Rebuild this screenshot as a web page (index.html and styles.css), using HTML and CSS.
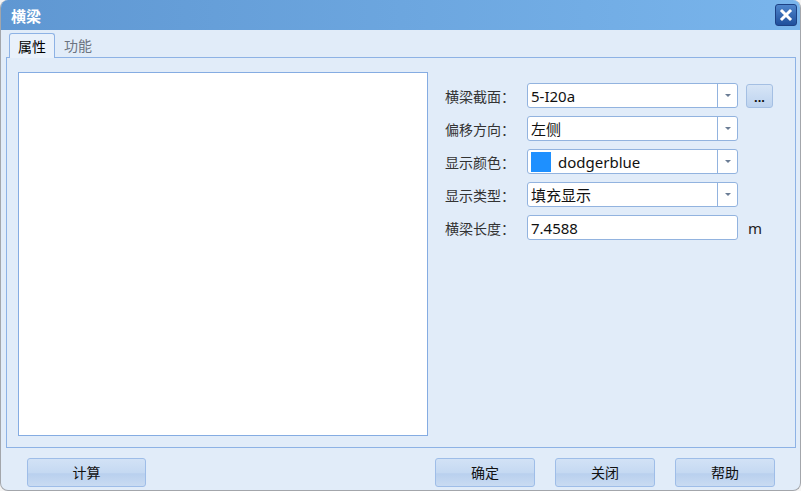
FILE: index.html
```html
<!DOCTYPE html>
<html lang="zh">
<head>
<meta charset="utf-8">
<link rel="stylesheet" href="styles.css">
</head>
<body>
<div class="window">
  <div class="titlebar">
    <span class="title">横梁</span>
    <span class="close">
      <svg width="22" height="22" viewBox="0 0 22 22"><path d="M7 7 L15 15 M15 7 L7 15" stroke="#fff" stroke-width="3" stroke-linecap="square"/></svg>
    </span>
  </div>
  <div class="body">
    <div class="tabs">
      <div class="tab active">属性</div>
      <div class="tab">功能</div>
    </div>
    <div class="panel">
      <div class="preview"></div>
      <div class="form">
        <div class="row">
          <span class="label">横梁截面：</span>
          <div class="combo"><span class="val">5-I20a</span><span class="arrow"></span></div>
          <button class="dots">...</button>
        </div>
        <div class="row">
          <span class="label">偏移方向：</span>
          <div class="combo"><span class="val">左侧</span><span class="arrow"></span></div>
        </div>
        <div class="row">
          <span class="label">显示颜色：</span>
          <div class="combo"><span class="val color"><i class="swatch"></i>dodgerblue</span><span class="arrow"></span></div>
        </div>
        <div class="row">
          <span class="label">显示类型：</span>
          <div class="combo"><span class="val">填充显示</span><span class="arrow"></span></div>
        </div>
        <div class="row">
          <span class="label">横梁长度：</span>
          <div class="combo text"><span class="val">7.4588</span></div>
          <span class="unit">m</span>
        </div>
      </div>
    </div>
    <div class="footer">
      <button class="btn">计算</button>
      <div class="spacer"></div>
      <button class="btn">确定</button>
      <button class="btn">关闭</button>
      <button class="btn">帮助</button>
    </div>
  </div>
</div>
</body>
</html>
```
FILE: styles.css
```css
* { box-sizing: border-box; }
html, body { margin: 0; padding: 0; background: #f4f4f4; }
body { font-family: "Noto Sans", "Noto Sans CJK SC", sans-serif; font-size: 14px; color: #222; }
.window {
  width: 801px; height: 491px;
  border-radius: 8px;
  overflow: hidden;
  background: #e1ecf9;
  border: 1px solid #a3a6ab;
  border-top: none;
  display: flex; flex-direction: column;
}
.titlebar {
  height: 31px;
  background: linear-gradient(to right, #5f97d2, #79b5ec);
  display: flex; align-items: center; justify-content: space-between;
  padding: 0 3px 0 10px;
}
.title { color: #fff; font-weight: bold; font-size: 15px; font-family: "Noto Sans CJK SC", sans-serif; }
.close {
  width: 22px; height: 22px;
  border-radius: 3px;
  background: linear-gradient(#4f86cc, #1f4f9c);
  border: 1px solid #1d4184;
  display: flex;
}
.close svg { margin: -1px; }
.body { flex: 1; display: flex; flex-direction: column; padding: 3px 4px 0 5px; }
.tabs { display: flex; padding-left: 3px; height: 25px; position: relative; z-index: 1; }
.tab {
  font-family: "Noto Sans CJK SC", sans-serif;
  padding: 0 9px; line-height: 24px; height: 25px; color: #6c7480;
}
.tab.active {
  color: #000;
  background: #e9f1fb;
  border: 1px solid #8db2e5; border-bottom: none;
  border-radius: 3px 3px 0 0;
  padding: 0 8px;
}
.panel {
  height: 391px;
  margin-top: -1px;
  border: 1px solid #8db2e5;
  display: flex;
  padding: 14px 12px 11px 11px;
}
.preview { width: 410px; background: #fff; border: 1px solid #85ace2; }
.form { display: flex; flex-direction: column; gap: 8px; padding: 11px 0 0 17px; }
.row { display: flex; align-items: center; height: 25px; }
.label { width: 82px; font-family: "Noto Sans CJK SC", sans-serif; color: #333; }
.combo {
  width: 211px; height: 25px;
  background: #fff;
  border: 1px solid #92b3df;
  border-radius: 3px;
  display: flex; align-items: center;
}
.val { flex: 1; padding-left: 3px; font-family: "Noto Sans", "Noto Sans CJK SC", sans-serif; color: #111; font-size: 15px; }
.val.color { display: flex; align-items: center; font-size: 15px; }
.swatch { display: inline-block; width: 20px; height: 20px; background: #1e90ff; margin-right: 7px; }
.arrow {
  width: 20px; height: 23px;
  border-left: 1px solid #92b3df;
  display: flex; align-items: center; justify-content: center;
}
.arrow::after {
  content: ""; border-left: 3px solid transparent; border-right: 3px solid transparent;
  border-top: 3px solid #6b7d95;
}
.dots {
  margin-left: 8px; width: 27px; height: 24px;
  border: 1px solid #a4bfe3; border-radius: 3px;
  background: linear-gradient(#d7e5f6, #bdd3ef);
  font-size: 13px; font-weight: bold; line-height: 14px; padding: 4px 0 0; color: #111;
}
.unit { margin-left: 10px; color: #222; font-size: 15px; }
.footer { display: flex; align-items: center; padding: 6px 21px 0 21px; height: 42px; }
.spacer { flex: 1; }
.btn {
  font-family: "Noto Sans CJK SC", sans-serif; font-size: 14px; color: #111;
  width: 100px; height: 29px; padding: 0;
  border: 1px solid #9ebde8; border-radius: 3px;
  background: linear-gradient(#d2e2f6 0%, #c5d9f2 50%, #b9d0ee 55%, #c9dbf2 100%);
}
.footer .btn:first-child { width: 119px; }
.footer .btn + .btn { margin-left: 20px; }
```
